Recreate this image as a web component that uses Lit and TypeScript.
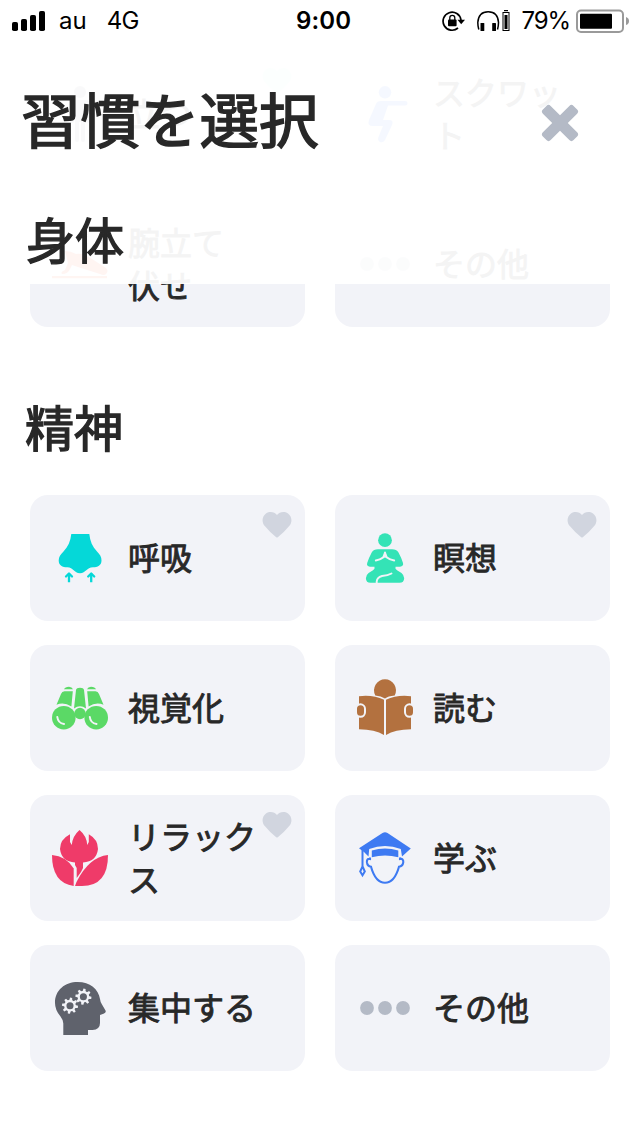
import { LitElement, html, svg, css, nothing } from "lit";
import { customElement, property } from "lit/decorators.js";

const gear = (cx: number, cy: number) => svg`
  <g transform="translate(${cx} ${cy})">
    <circle r="4.700" fill="none" stroke="#f2f3f8" stroke-width="2.300"/>
    ${[0, 45, 90, 135, 180, 225, 270, 315].map(
      (a) => svg`<path d="M-1.500 -5L-1.100 -8H1.100L1.500 -5Z" fill="#f2f3f8" transform="rotate(${a + 8})"/>`
    )}
  </g>`;

const icons: Record<string, unknown> = {
  stand: svg`<g fill="#8b8f98"><circle cx="28" cy="6" r="6"/><path d="M18 18q0-4 4-4h12q4 0 4 4v17q0 2-2 2t-2-2V20h-1v34q0 2-2 2t-2-2V36h-2v18q0 2-2 2t-2-2V20h-1v15q0 2-2 2t-2-2z"/></g>`,
  squat: svg`<g fill="#3c7af0"><circle cx="28" cy="6.300" r="6.200"/><path d="M24 15H48Q50.500 15 50.500 17.200T48 19.500H31L26 34H32Q37 34 35 39L28 54Q26 57 23 56Q20 54 21.500 51L26 40H16Q10 40 12 34L19 18Q20 15 24 15Z"/></g>`,
  pushup: svg`<g fill="#ff3a10"><path d="M13 15Q19 15 24 18Q30 17 37 21L54 32Q57 35 54 38Q52 40 48 38L29 32L20 29L18 33Q16 38 10 38Q8 36 13 34L16 27Z"/><rect x="0" y="40" width="55" height="2.200"/></g>`,
  dots: svg`<g fill="#b4bac6"><circle cx="10" cy="28" r="6.900"/><circle cx="28" cy="28" r="6.900"/><circle cx="46" cy="28" r="6.900"/></g>`,
  nose: svg`<g fill="#05d8d8"><path d="M19.300 4H37.300C38 11 40.500 17 45 21.500C48 24.500 49.500 27 49.500 30.500C49.500 35.500 45.500 37.300 41 37.300C34.500 37.300 34 43.300 28 43.300S21.500 37.300 15.300 37.300C10.500 37.300 6.700 35.500 6.700 30.500C6.700 27 8.500 24.500 11.500 21.500C16 17 18.600 11 19.300 4Z"/></g><g fill="none" stroke="#05d8d8" stroke-width="2.300" stroke-linejoin="round" stroke-linecap="round"><path d="M14 46.500L17 43.500L20 46.500M36.200 46.500L39.200 43.500L42.200 46.500"/><path stroke-linecap="butt" d="M17 43.500V52.200M39.200 43.500V52.200"/></g>`,
  meditate: svg`<circle cx="28" cy="10.200" r="6.900" fill="#34e3b6"/><path fill="#34e3b6" d="M21 19.300H35Q39.500 19.300 41.500 22.500Q44.500 28 46 33Q46.800 36.300 43 36.800H38.500Q37.800 39 40 40.200L44.500 43Q47.200 45.300 47.200 48.200Q47 52.800 42.500 52.800H13.500Q9 52.800 8.900 48.200Q9 45 11.600 43L16 40.200Q18.200 39 17.500 36.800H13Q9.200 36.300 10.200 33Q12 27.500 14.700 22.500Q16.500 19.300 21 19.300Z"/><path fill="none" stroke="#f2f3f8" stroke-width="1.900" stroke-linecap="round" stroke-linejoin="round" d="M28 22.500Q27.300 25.500 26 27.500Q23 30 18.800 30.500M28 22.500Q28.700 25.500 30 27.500Q33 30 37.200 30.500M19.700 53V51.500Q20 47.500 25 46Q31 45.600 34.500 43.500"/><path d="M28 22Q25.500 26.500 26.300 28.300L28 27.500L29.700 28.300Q30.500 26.500 28 22Z" fill="#f2f3f8"/>`,
  binoculars: svg`<g fill="#5bd966"><path d="M12 9.300Q13 6.700 17 6.700Q20 6.700 21 9.300ZM35 9.300Q36 6.700 39 6.700Q43 6.700 44 9.300Z"/><path d="M12.500 11.300H20.800L19.400 26.500Q12 21.500 4.500 24.700L9 14Q10 11.300 12.500 11.300ZM43.500 11.300H35.200L36.600 26.500Q44 21.500 51.500 24.700L47 14Q46 11.300 43.500 11.300Z"/><path d="M24 10Q24.500 7.700 28 7.700T32 10L34 28.500Q31 26.300 28 26.300T22 28.500Z"/><circle cx="28" cy="33.500" r="5.700"/><circle cx="11.800" cy="37.700" r="11.800"/><circle cx="44.200" cy="37.700" r="11.800"/></g><path d="M5.300 37Q6 43.200 12 43.900M37.800 37Q38.500 43.200 44.500 43.900" fill="none" stroke="#f2f3f8" stroke-width="2" stroke-linecap="round"/>`,
  reader: svg`<g fill="#b3713f"><path d="M18.300 15.500A11 11 0 1 1 37.700 15.500Q31 16 28 18.500Q24 16 18.300 15.500Z"/><path d="M2 16.200Q16 14.500 27 19.800V55Q18 49.500 2 49.300ZM54 16.200Q40 14.500 29 19.800V55Q38 49.500 54 49.300Z"/></g><g fill="#b3713f" stroke="#f2f3f8" stroke-width="2"><rect x="-1" y="24.300" width="9" height="12.500" rx="4.500"/><rect x="48" y="24.300" width="9" height="12.500" rx="4.500"/></g>`,
  tulip: svg`<g fill="#ef3b69"><path d="M18 4.300V12L19.800 15Q20.500 6 27.500 0Q34.800 6 35.200 15L36.800 12V4.300Q46 9.500 46 19Q44.500 31.500 31 32.500V38L29 42L24.700 48V38L23 35V32.500Q9.500 31.500 8 19Q8 9.500 18 4.300Z"/><path d="M0 25Q14 26 21.700 38.500V56Q0 53 0 25Z"/><path d="M56 25Q56 56 30 56H23L24.500 52Q37 27 56 25Z"/></g>`,
  graduate: svg`<path fill="#3e7af2" d="M2 18.200L25.500 3Q28 1.500 30.500 3L53.800 18.500L45 26.500L43.800 19Q28 13 12.200 19L11.500 26.500L7 22Z"/><path fill="#3e7af2" d="M14.800 20.500Q28 16.500 41.300 20.500V27.200Q28 24 14.800 27.200Z"/><g fill="none" stroke="#3e7af2" stroke-width="2.100"><path d="M13 27.500V29Q9.600 28.200 9.900 32.200Q10.400 36.500 14 36.700Q18.500 52.700 28 52.700T42 36.700Q45.700 36.500 46.300 32.200Q46.500 28.200 43 29V27.500"/><path stroke-width="2" d="M5.500 19V36M5.500 36.300L3.200 41.500L5.500 45.300L7.800 41.500Z"/></g>`,
  focus: svg`<path fill="#5f626c" d="M11.300 55V43.500Q11.300 40 8.500 36.500Q3 30 3 23C3 10 13 2 25.700 2C38 2 46.500 9 48 19Q48.300 22 50 24.500L53.500 30.500Q54.500 32.800 51.500 33.800L48 35V43Q48 49.500 40.500 50H36V55Z"/>${gear(18, 25.700)}${gear(31.400, 16.700)}`,
};

/** One selectable habit: icon, label and an optional favourite mark. */
@customElement("habit-card")
class HabitCard extends LitElement {
  @property() icon = "";
  @property() label = "";
  @property() heart = "";

  static styles = css`
    :host {
      display: flex;
      align-items: center;
      gap: 20px;
      box-sizing: border-box;
      height: 126px;
      padding-left: 22px;
      border-radius: 18px;
      background: #f2f3f8;
      position: relative;
    }
    .icon {
      width: 56px;
      height: 56px;
      flex: none;
      overflow: visible;
    }
    .label {
      padding-bottom: 3px;
      font-size: 32px;
      line-height: 43px;
      font-weight: 400;
      -webkit-text-stroke: 0.028em currentColor;
      white-space: pre;
    }
    .heart {
      position: absolute;
      top: 17px;
      right: 13px;
      width: 30px;
      height: 26px;
    }
    .idle {
      fill: #d1d5df;
    }
    .active {
      fill: #c8f8e8;
    }
  `;

  render() {
    return html`
      <svg class="icon" viewBox="0 0 56 56">${icons[this.icon]}</svg>
      <span class="label">${this.label}</span>
      ${this.heart
        ? html`<svg class="heart ${this.heart}" viewBox="0 0 30 26">
            <path d="M15 3C17.500 -.3 22.500 -.8 26 1.500C30.300 4.800 30.500 10.500 27 14.300Q22 20.500 15.800 25.200Q15 25.700 14.200 25.200Q8 20.500 3 14.300C-.5 10.500 -.3 4.800 4 1.500C7.500 -.8 12.500 -.3 15 3Z"/>
          </svg>`
        : nothing}
    `;
  }
}

@customElement("status-bar")
class StatusBar extends LitElement {
  static styles = css`
    :host {
      display: grid;
      grid-template-columns: 284px 1fr auto;
      align-items: center;
      height: 40px;
      box-sizing: border-box;
      padding: 0 11px 0 12px;
      color: #000;
      font: 400 24px/40px Inter, "Liberation Sans", sans-serif;
    }
    .side {
      display: flex;
      align-items: center;
      height: 40px;
    }
    svg {
      display: block;
      flex: none;
    }
    span {
      padding-top: 1px;
    }
    .carrier {
      margin-left: 14px;
    }
    .network {
      margin-left: 20px;
      letter-spacing: -0.6px;
    }
    .time {
      font-weight: 600;
      letter-spacing: 0.1px;
    }
    .percent {
      letter-spacing: -1.1px;
      margin: 0 6px 0 12px;
    }
    .phones {
      margin-left: 12px;
    }
  `;

  render() {
    return html`
      <div class="side">
        <svg width="33" height="20" viewBox="0 0 33 20">
          <rect y="11" width="6" height="9" rx="1.800"/><rect x="9" y="8" width="6" height="12" rx="1.800"/>
          <rect x="18" y="4" width="6" height="16" rx="1.800"/><rect x="27" width="6" height="20" rx="1.800"/>
        </svg>
        <span class="carrier">au</span><span class="network">4G</span>
      </div>
      <span class="time">9:00</span>
      <div class="side">
        <svg width="23" height="22" viewBox="0 0 23 22">
          <path d="M16 18A9 9 0 1 1 19 10" fill="none" stroke="#000" stroke-width="1.700"/>
          <path d="M15.500 9.700H23L19.200 14.200Z"/>
          <rect x="6" y="9.500" width="8.600" height="6.700" rx="1"/>
          <path d="M7.800 10V7.800Q7.800 5.400 10.300 5.400T12.800 7.800V10" fill="none" stroke="#000" stroke-width="1.300"/>
        </svg>
        <svg class="phones" width="33" height="22" viewBox="0 0 33 22">
          <path d="M1.800 19.500Q.8 16 .8 12.500Q1.500 1.700 11.200 1.700T21.500 12.500Q21.500 16 20.500 19.500" fill="none" stroke="#000" stroke-width="1.500"/>
          <rect x="3.500" y="13" width="3.800" height="8" rx=".6"/><rect x="15.200" y="13" width="3.800" height="8" rx=".6"/>
          <rect x="26" y="2.500" width="6" height="18" fill="none" stroke="#000"/>
          <rect x="27.500" y="5" width="3" height="14"/><rect x="27" y="0" width="4" height="1.200"/>
        </svg>
        <span class="percent">79%</span>
        <svg width="53" height="24" viewBox="0 0 53 24">
          <rect x="1" y="1.500" width="46" height="21.500" rx="4" fill="none" stroke="#9a9a9a" stroke-width="2"/>
          <rect x="4" y="4.800" width="32" height="15" rx="1"/>
          <path d="M50 8Q53 9 53 12T50 16Z" fill="#9a9a9a"/>
        </svg>
      </div>
    `;
  }
}

type Habit = { icon: string; label: string; heart?: string };

const body: Habit[] = [
  { icon: "stand", label: "立つ", heart: "active" },
  { icon: "squat", label: "スクワッ\nト" },
  { icon: "pushup", label: "腕立て\n伏せ" },
  { icon: "dots", label: "その他" },
];

const mind: Habit[] = [
  { icon: "nose", label: "呼吸", heart: "idle" },
  { icon: "meditate", label: "瞑想", heart: "idle" },
  { icon: "binoculars", label: "視覚化" },
  { icon: "reader", label: "読む" },
  { icon: "tulip", label: "リラック\nス", heart: "idle" },
  { icon: "graduate", label: "学ぶ" },
  { icon: "focus", label: "集中する" },
  { icon: "dots", label: "その他" },
];

@customElement("app-root")
class AppRoot extends LitElement {
  static styles = css`
    :host {
      display: block;
      position: relative;
      height: 1136px;
      overflow: hidden;
      background: #fff;
      color: #282828;
      font-family: "Noto Sans CJK JP", sans-serif;
    }
    .list {
      padding: 51px 30px 0;
    }
    .grid {
      display: grid;
      grid-template-columns: 275px 275px;
      gap: 24px 30px;
    }
    h1,
    h2 {
      margin: 0;
      font-weight: 400;
      -webkit-text-stroke: 0.027em currentColor;
    }
    h1 {
      font-size: 59.5px;
      line-height: 80px;
    }
    h2 {
      font-size: 49px;
      line-height: 64px;
    }
    .list h2 {
      padding: 67px 0 37px;
      margin-left: -5px;
    }
    .header {
      position: absolute;
      inset: 0 0 auto;
      height: 284px;
      background: rgba(255, 255, 255, 0.95);
    }
    .title {
      display: flex;
      justify-content: space-between;
      align-items: center;
      padding: 37px 61px 0 21px;
    }
    .close {
      width: 38px;
      height: 38px;
      margin-top: 11px;
    }
    .header h2 {
      padding: 49px 0 0 26px;
    }
  `;

  private cards(items: Habit[]) {
    return html`<div class="grid">
      ${items.map(
        (h) => html`<habit-card .icon=${h.icon} .label=${h.label} .heart=${h.heart ?? ""}></habit-card>`
      )}
    </div>`;
  }

  render() {
    return html`
      <div class="list">
        ${this.cards(body)}
        <h2>精神</h2>
        ${this.cards(mind)}
      </div>
      <div class="header">
        <status-bar></status-bar>
        <div class="title">
          <h1>習慣を選択</h1>
          <svg class="close" viewBox="0 0 38 38">
            <g fill="#b4bac6">
              <rect x="-2.700" y="13.500" width="43.400" height="11" rx="3" transform="rotate(45 19 19)"/>
              <rect x="-2.700" y="13.500" width="43.400" height="11" rx="3" transform="rotate(-45 19 19)"/>
            </g>
          </svg>
        </div>
        <h2>身体</h2>
      </div>
    `;
  }
}
